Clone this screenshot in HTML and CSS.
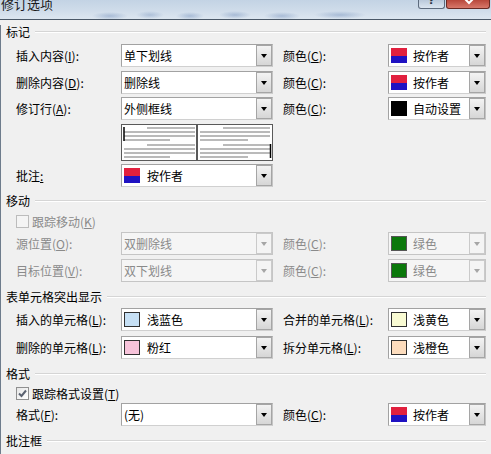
FILE: index.html
```html
<!DOCTYPE html>
<html lang="zh-CN">
<head>
<meta charset="utf-8">
<title>修订选项</title>
<link rel="stylesheet" href="styles.css">
</head>
<body>
<div class="titlebar">
  <span class="title">修订选项</span>
  <div class="controls">
    <span class="btn help"><span class="glyph">?</span></span>
    <span class="btn close"><svg width="44" height="9" viewBox="0 0 44 9"><path d="M17 -2 L22 3 L27 -2" stroke="#fff" stroke-width="2" fill="none"/></svg></span>
  </div>
</div>
<div class="panel">
  <div class="heading mt5"><span>标记</span><i class="rule"></i></div>

  <div class="row mt5">
    <span class="lbl">插入内容(<u>I</u>):</span>
    <div class="combo"><span class="val">单下划线</span><span class="arrow"></span></div>
    <span class="lbl clbl">颜色(<u>C</u>):</span>
    <div class="combo ccombo"><span class="sw sw-author"></span><span class="val">按作者</span><span class="arrow"></span></div>
  </div>

  <div class="row mt4">
    <span class="lbl">删除内容(<u>D</u>):</span>
    <div class="combo"><span class="val">删除线</span><span class="arrow"></span></div>
    <span class="lbl clbl">颜色(<u>C</u>):</span>
    <div class="combo ccombo"><span class="sw sw-author"></span><span class="val">按作者</span><span class="arrow"></span></div>
  </div>

  <div class="row mt3">
    <span class="lbl">修订行(<u>A</u>):</span>
    <div class="combo"><span class="val">外侧框线</span><span class="arrow"></span></div>
    <span class="lbl clbl">颜色(<u>C</u>):</span>
    <div class="combo ccombo"><span class="sw sw-black"></span><span class="val">自动设置</span><span class="arrow"></span></div>
  </div>

  <div class="row preview-row mt4">
    <span></span>
    <svg class="preview" width="152" height="37" viewBox="0 0 152 37">
      <rect x="0.5" y="0.5" width="151" height="36" fill="#fff" stroke="#5a5a5a"/>
      <line x1="76" y1="0" x2="76" y2="37" stroke="#5a5a5a" stroke-width="2"/>
      <g stroke="#a3a3a3" stroke-width="1.5">
        <line x1="26" y1="4" x2="74" y2="4"/>
        <line x1="3" y1="8" x2="74" y2="8"/>
        <line x1="3" y1="12" x2="74" y2="12"/>
        <line x1="3" y1="16" x2="49" y2="16"/>
        <line x1="26" y1="21" x2="74" y2="21"/>
        <line x1="3" y1="25" x2="74" y2="25"/>
        <line x1="3" y1="29" x2="74" y2="29"/>
        <line x1="3" y1="33" x2="49" y2="33"/>
        <line x1="102" y1="4" x2="149" y2="4"/>
        <line x1="79" y1="8" x2="149" y2="8"/>
        <line x1="79" y1="12" x2="149" y2="12"/>
        <line x1="79" y1="16" x2="127" y2="16"/>
        <line x1="102" y1="21" x2="149" y2="21"/>
        <line x1="79" y1="25" x2="149" y2="25"/>
        <line x1="79" y1="29" x2="149" y2="29"/>
        <line x1="79" y1="33" x2="127" y2="33"/>
      </g>
      <line x1="3" y1="3" x2="3" y2="17" stroke="#000" stroke-width="1.5"/>
      <line x1="149.5" y1="20" x2="149.5" y2="34" stroke="#000" stroke-width="1.5"/>
    </svg>
  </div>

  <div class="row mt3">
    <span class="lbl">批注<u>:</u></span>
    <div class="combo"><span class="sw sw-author"></span><span class="val sval">按作者</span><span class="arrow"></span></div>
  </div>

  <div class="heading mt7"><span>移动</span><i class="rule"></i></div>

  <div class="check-row mt7 disabled">
    <span class="box"></span><span>跟踪移动(<u>K</u>)</span>
  </div>

  <div class="row mt4 disabled">
    <span class="lbl">源位置(<u>O</u>):</span>
    <div class="combo"><span class="val">双删除线</span><span class="arrow"></span></div>
    <span class="lbl clbl">颜色(<u>C</u>):</span>
    <div class="combo ccombo"><span class="sw sw-green"></span><span class="val">绿色</span><span class="arrow"></span></div>
  </div>

  <div class="row mt4 disabled">
    <span class="lbl">目标位置(<u>V</u>):</span>
    <div class="combo"><span class="val">双下划线</span><span class="arrow"></span></div>
    <span class="lbl clbl">颜色(<u>C</u>):</span>
    <div class="combo ccombo"><span class="sw sw-green"></span><span class="val">绿色</span><span class="arrow"></span></div>
  </div>

  <div class="heading mt8"><span>表单元格突出显示</span><i class="rule"></i></div>

  <div class="row mt4">
    <span class="lbl">插入的单元格(<u>L</u>):</span>
    <div class="combo"><span class="sw sw-lblue"></span><span class="val sval">浅蓝色</span><span class="arrow"></span></div>
    <span class="lbl clbl">合并的单元格(<u>L</u>):</span>
    <div class="combo ccombo"><span class="sw sw-lyellow"></span><span class="val">浅黄色</span><span class="arrow"></span></div>
  </div>

  <div class="row mt5">
    <span class="lbl">删除的单元格(<u>L</u>):</span>
    <div class="combo"><span class="sw sw-pink"></span><span class="val sval">粉红</span><span class="arrow"></span></div>
    <span class="lbl clbl">拆分单元格(<u>L</u>):</span>
    <div class="combo ccombo"><span class="sw sw-lorange"></span><span class="val">浅橙色</span><span class="arrow"></span></div>
  </div>

  <div class="heading mt8"><span>格式</span><i class="rule"></i></div>

  <div class="check-row mt6">
    <span class="box checked"><svg width="11" height="11" viewBox="0 0 11 11"><path d="M2 5.5 L4.5 8 L9 2.5" stroke="#5b6270" stroke-width="2" fill="none"/></svg></span><span>跟踪格式设置(<u>T</u>)</span>
  </div>

  <div class="row mt3">
    <span class="lbl">格式(<u>F</u>):</span>
    <div class="combo"><span class="val">(无)</span><span class="arrow"></span></div>
    <span class="lbl clbl">颜色(<u>C</u>):</span>
    <div class="combo ccombo"><span class="sw sw-author"></span><span class="val">按作者</span><span class="arrow"></span></div>
  </div>

  <div class="heading mt8"><span>批注框</span><i class="rule"></i></div>
</div>
</body>
</html>
```

FILE: styles.css
```css
* { box-sizing: border-box; }

html, body {
  margin: 0;
  padding: 0;
}

body {
  width: 491px;
  height: 454px;
  overflow: hidden;
  background: #f0f0f0;
  font-family: "Noto Sans CJK SC", "Noto Sans", sans-serif;
  font-size: 12px;
  color: #000;
}

u { text-decoration: underline; text-underline-offset: 1px; }

/* title bar */
.titlebar {
  height: 20px;
  display: flex;
  align-items: flex-start;
  border-bottom: 1px solid #4a5868;
  background:
    radial-gradient(ellipse 18px 4px at 110px 16px, rgba(80,115,170,.35), transparent),
    radial-gradient(ellipse 14px 4px at 150px 15px, rgba(80,115,170,.30), transparent),
    radial-gradient(ellipse 14px 4px at 190px 16px, rgba(80,115,170,.35), transparent),
    radial-gradient(ellipse 16px 4px at 235px 15px, rgba(80,115,170,.35), transparent),
    radial-gradient(ellipse 18px 4px at 282px 16px, rgba(80,115,170,.35), transparent),
    radial-gradient(ellipse 26px 4px at 340px 15px, rgba(80,115,170,.35), transparent),
    linear-gradient(180deg, #c3d3e4 0%, #cfdcea 55%, #dce6f0 100%);
}

.title {
  font-size: 13px;
  line-height: 13px;
  margin-top: -3px;
  padding-left: 1px;
  color: #1a1a1a;
}

.controls {
  margin-left: auto;
  margin-right: 1px;
  display: flex;
  gap: 1px;
}

.btn {
  height: 9px;
  overflow: hidden;
  display: block;
  border: 1px solid #5d6b7e;
  border-top: none;
  border-radius: 0 0 3px 3px;
}

.help {
  width: 27px;
  background: linear-gradient(180deg, #b9c8da, #dbe5f0);
  text-align: center;
}

.help .glyph {
  display: block;
  font-family: "DejaVu Sans", sans-serif;
  font-weight: bold;
  font-size: 11px;
  line-height: 11px;
  margin-top: -5px;
  color: #2a3444;
}

.close {
  width: 44px;
  background: linear-gradient(180deg, #b8473b, #d8786a);
  border-color: #6a2a24;
}

.close svg { display: block; }

/* panel */
.panel {
  border-left: 1px solid #6e7c8c;
  height: 434px;
}

.mt3 { margin-top: 3px; }
.mt4 { margin-top: 4px; }
.mt5 { margin-top: 5px; }
.mt6 { margin-top: 6px; }
.mt7 { margin-top: 7px; }
.mt8 { margin-top: 8px; }

.heading {
  height: 14px;
  display: flex;
  align-items: center;
  padding-left: 5px;
  padding-right: 5px;
  line-height: 14px;
  white-space: nowrap;
}

.heading .rule {
  flex: 1;
  height: 2px;
  margin-left: 5px;
  border-top: 1px solid #d5d5d5;
  border-bottom: 1px solid #ffffff;
}

.row {
  height: 23px;
  display: grid;
  grid-template-columns: 105px 152px 115px 98px;
  align-items: center;
  padding-left: 15px;
}

.lbl {
  white-space: nowrap;
  line-height: 14px;
}

.clbl { padding-left: 10px; }

.combo {
  height: 23px;
  display: flex;
  align-items: center;
  background: #fff;
  border: 1px solid #a2a2a2;
  border-right-color: #c4c4c4;
  border-bottom-color: #d0d0d0;
  padding-left: 2px;
  white-space: nowrap;
}

.val { line-height: 14px; }

.sw {
  width: 16px;
  height: 15px;
  flex: none;
  margin-right: 6px;
  border: 1px solid #303030;
}

.sval { margin-left: 1px; }

.sw-author {
  border: none;
  background: linear-gradient(180deg, #e1203e 0 50%, #1f12c2 50% 100%);
}
.sw-black { background: #000; border-color: #000; }
.sw-green { background: #0b780b; border-color: #303030; }
.sw-lblue { background: #c6e0f5; }
.sw-pink { background: #f7c3da; }
.sw-lyellow { background: #f9fbd3; }
.sw-lorange { background: #fcdcbd; }

.arrow {
  margin-left: auto;
  width: 16px;
  height: 21px;
  flex: none;
  display: flex;
  align-items: center;
  justify-content: center;
  background: linear-gradient(180deg, #f3f3f3, #d6d6d6);
  border: 1px solid #a5a5a5;
}

.arrow::after {
  content: "";
  width: 0;
  height: 0;
  border-left: 3.5px solid transparent;
  border-right: 3.5px solid transparent;
  border-top: 4px solid #000;
}

.preview-row { height: 37px; }
.preview { display: block; }

.check-row {
  height: 13px;
  display: flex;
  align-items: center;
  gap: 3px;
  padding-left: 15px;
  line-height: 14px;
  white-space: nowrap;
}

.box {
  width: 13px;
  height: 13px;
  flex: none;
  border: 1px solid #8f8f8f;
  background: linear-gradient(135deg, #e6e6e6, #ffffff);
  display: flex;
  align-items: center;
  justify-content: center;
}

/* disabled */
.disabled { color: #8a8a8a; }
.disabled .box { border-color: #bcbcbc; background: #f4f4f4; }
.disabled .combo {
  background: #f5f5f5;
  border-color: #c5c5c5;
}
.disabled .arrow {
  background: #f4f4f4;
  border-color: #cacaca;
}
.disabled .arrow::after { border-top-color: #a6a6a6; }
.disabled .sw-green { border-color: #555; }
```
